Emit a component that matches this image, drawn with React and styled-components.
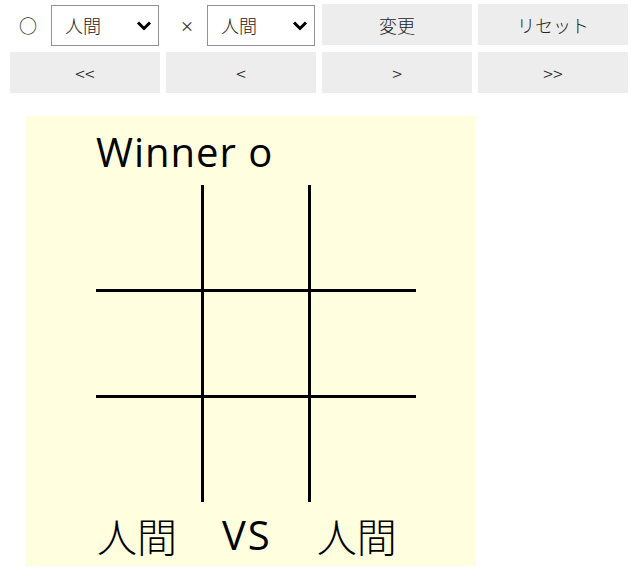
import React from 'react'
import styled, { createGlobalStyle } from 'styled-components'

const GlobalStyle = createGlobalStyle`
  body {
    margin: 0;
    background: #fff;
    font-family: "Noto Sans CJK JP", "Open Sans", sans-serif;
    color: #000;
  }
`;

const Page = styled.div`
  padding: 4px 10px;
`;

const Toolbar = styled.div`
  display: grid;
  grid-template-columns: repeat(4, 150px);
  grid-auto-rows: 41px;
  column-gap: 6px;
  row-gap: 7px;
`;

const PlayerCell = styled.div`
  display: flex;
  align-items: center;
  justify-content: flex-end;
  gap: ${p => p.$gap}px;
  padding-right: 1px;
  padding-top: 1px;
`;

const Mark = styled.span`
  font-size: ${p => p.$size}px;
  line-height: 1;
  color: #222;
`;

const SelectWrap = styled.div`
  position: relative;
  width: 108px;
  height: 41px;
`;

const Select = styled.select`
  appearance: none;
  width: 100%;
  height: 100%;
  box-sizing: border-box;
  border: 1px solid #939393;
  border-radius: 0;
  background: #fff;
  padding: 0 0 0 13px;
  font-family: "Noto Sans CJK JP", sans-serif;
  font-size: 18px;
  font-weight: 300;
  color: #222;
  outline: none;
`;

const Chevron = styled.svg`
  position: absolute;
  right: 7px;
  top: 16px;
  pointer-events: none;
`;

const Button = styled.button`
  border: none;
  background: #ededed;
  font-family: "Noto Sans CJK JP", "Open Sans", sans-serif;
  font-size: 18px;
  font-weight: 300;
  color: #222;
  padding: 0;
  cursor: pointer;
`;

const Panel = styled.div`
  width: 450px;
  height: 450px;
  margin: 23px 0 0 16px;
  background: #ffffe0;
  box-sizing: border-box;
  padding: 10px 0 0 70px;
  display: flex;
  flex-direction: column;
`;

const Title = styled.div`
  font-family: "Open Sans", sans-serif;
  font-size: 40px;
  letter-spacing: 1px;
  line-height: 48px;
  height: 48px;
  padding-top: 2px;
`;

const Board = styled.div`
  margin-top: 9px;
  width: 320px;
  height: 317px;
  display: grid;
  grid-template-columns: repeat(3, 1fr);
  grid-template-rows: repeat(3, 1fr);
  gap: 3px;
  background: #000;
`;

const Cell = styled.div`
  background: #ffffe0;
`;

const Versus = styled.div`
  margin: 9px 0 0 1px;
  display: flex;
  gap: 45px;
  font-family: "Noto Sans CJK JP", sans-serif;
  font-size: 40px;
  font-weight: 300;
  line-height: 48px;
`;

const VsText = styled.span`
  font-family: "Open Sans", sans-serif;
  font-weight: 400;
  letter-spacing: 2px;
`;

const PlayerSelect = ({ mark, size, gap }) => (
  <PlayerCell $gap={gap}>
    <Mark $size={size}>{mark}</Mark>
    <SelectWrap>
      <Select defaultValue="human">
        <option value="human">人間</option>
        <option value="cpu">CPU</option>
      </Select>
      <Chevron width="16" height="10" viewBox="0 0 16 10">
        <path d="M2 1.5 L8 7.5 L14 1.5" fill="none" stroke="#000" strokeWidth="3" />
      </Chevron>
    </SelectWrap>
  </PlayerCell>
);

export default function App() {
  const cells = Array.from({ length: 9 });
  return (
    <Page>
      <GlobalStyle />
      <Toolbar>
        <PlayerSelect mark="○" size={18} gap={14} />
        <PlayerSelect mark="×" size={14} gap={13} />
        <Button>変更</Button>
        <Button>リセット</Button>
        <Button>&lt;&lt;</Button>
        <Button>&lt;</Button>
        <Button>&gt;</Button>
        <Button>&gt;&gt;</Button>
      </Toolbar>
      <Panel>
        <Title>Winner o</Title>
        <Board>
          {cells.map((_, i) => <Cell key={i} />)}
        </Board>
        <Versus>
          <span>人間</span>
          <VsText>VS</VsText>
          <span>人間</span>
        </Versus>
      </Panel>
    </Page>
  );
}
